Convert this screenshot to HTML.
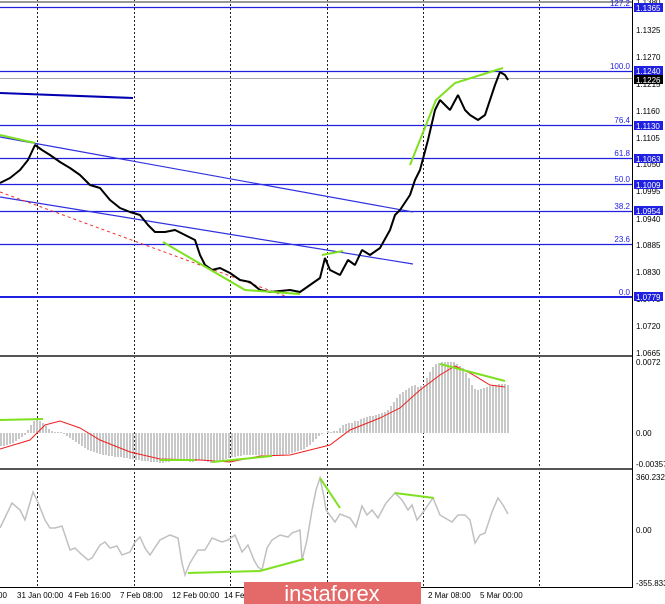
<!DOCTYPE html>
<html><head><meta charset="utf-8"><style>
html,body{margin:0;padding:0;background:#fff;}
svg{display:block;font-family:"Liberation Sans",sans-serif;}
</style></head><body>
<svg width="665" height="604" viewBox="0 0 665 604" xmlns="http://www.w3.org/2000/svg">
<rect width="665" height="604" fill="#fff"/>
<g stroke="#222" stroke-width="1" stroke-dasharray="2,2">
<line x1="37.5" y1="0" x2="37.5" y2="587"/><line x1="134.5" y1="0" x2="134.5" y2="587"/>
<line x1="230.5" y1="0" x2="230.5" y2="587"/><line x1="327.5" y1="0" x2="327.5" y2="587"/>
<line x1="423.5" y1="0" x2="423.5" y2="587"/><line x1="539.5" y1="0" x2="539.5" y2="587"/>
</g>
<line x1="0" y1="2" x2="632" y2="2" stroke="#999" stroke-width="2"/>
<g stroke="#2020e0" stroke-width="1.3">
<line x1="0" y1="7.5" x2="632" y2="7.5"/><line x1="0" y1="71.5" x2="632" y2="71.5"/>
<line x1="0" y1="125.5" x2="632" y2="125.5"/><line x1="0" y1="158.5" x2="632" y2="158.5"/>
<line x1="0" y1="184.5" x2="632" y2="184.5"/><line x1="0" y1="211.5" x2="632" y2="211.5"/>
<line x1="0" y1="244.5" x2="632" y2="244.5"/>
</g>
<line x1="0" y1="297" x2="632" y2="297" stroke="#2020e0" stroke-width="2"/>
<line x1="0" y1="78.5" x2="632" y2="78.5" stroke="#aaa" stroke-width="1"/>
<g font-size="8" fill="#2020e0" text-anchor="end">
<text x="630" y="6">127.2</text><text x="630" y="69">100.0</text><text x="630" y="123">76.4</text>
<text x="630" y="156">61.8</text><text x="630" y="182">50.0</text><text x="630" y="209">38.2</text>
<text x="630" y="242">23.6</text><text x="630" y="295">0.0</text>
</g>
<line x1="0" y1="93" x2="133" y2="98" stroke="#0000b0" stroke-width="2"/>
<line x1="0" y1="137" x2="413" y2="212" stroke="#3030e0" stroke-width="1.2"/>
<line x1="0" y1="197" x2="413" y2="264" stroke="#3030e0" stroke-width="1.2"/>
<line x1="0" y1="192" x2="285" y2="296" stroke="#f03030" stroke-width="1" stroke-dasharray="3,3"/>
<polyline fill="none" stroke="#000" stroke-width="2" stroke-linejoin="bevel" points="0,183 10,178 20,170 28,160 35,145 42,150 50,155 60,162 70,168 80,175 90,185 100,188 110,200 120,208 130,212 140,215 148,225 155,232 165,232 175,230 185,235 195,240 200,255 205,265 212,270 220,268 230,273 240,280 250,282 260,290 270,292 280,291 290,290 300,292 310,285 320,278 325,258 330,270 340,275 348,260 355,265 362,250 370,255 380,248 390,230 395,215 400,210 410,195 415,180 420,170 428,140 435,110 440,100 450,110 458,95 465,110 470,115 478,120 485,115 490,100 495,85 500,72 505,75 508,80"/>
<g fill="none" stroke="#7ee020" stroke-width="2">
<polyline points="0,135 35,143"/><polyline points="163,242 245,290 300,294"/>
<polyline points="322,255 343,251"/><polyline points="410,165 436,100 455,83 503,68"/>
</g>
<line x1="0" y1="356" x2="632" y2="356" stroke="#555" stroke-width="2"/>
<line x1="0" y1="469" x2="632" y2="469" stroke="#555" stroke-width="2"/>
<path fill="none" stroke="#c8c8c8" stroke-width="2" d="
M1 433V446M4 433V446M7 433V445M10 433V444M13 433V443M16 433V441M19 433V439M22 433V437M25 433V435M28 433V430M31 433V425M34 433V421M37 433V420M40 433V421M43 433V423M46 433V426M49 433V429M52 433V431M55 433V432M58 433V432M61 433V432M64 433V434M67 433V436M70 433V438M73 433V440M76 433V442M79 433V444M82 433V446M85 433V448M88 433V450M91 433V451M94 433V452M97 433V453M100 433V454M103 433V455M106 433V455M109 433V456M112 433V456M115 433V457M118 433V457M121 433V457M124 433V458M127 433V458M130 433V459M133 433V459M136 433V460M139 433V460M142 433V461M145 433V461M148 433V461M151 433V462M154 433V462M157 433V462M160 433V463M163 433V463M166 433V462M169 433V462M172 433V461M175 433V461M178 433V460M181 433V460M184 433V461M187 433V461M190 433V462M193 433V462M196 433V461M199 433V460M202 433V460M205 433V461M208 433V462M211 433V463M214 433V463M217 433V462M220 433V461M223 433V460M226 433V459M229 433V458M232 433V457M235 433V457M238 433V456M241 433V456M244 433V455M247 433V455M250 433V455M253 433V455M256 433V455M259 433V455M262 433V455M265 433V455M268 433V455M271 433V455M274 433V455M277 433V455M280 433V455M283 433V455M286 433V454M289 433V454M292 433V453M295 433V452M298 433V451M301 433V450M304 433V449M307 433V447M310 433V445M313 433V442M316 433V439M319 433V436M322 433V434M325 433V433M328 433V431M331 433V432M334 433V431M337 433V431M340 433V428M343 433V425M346 433V424M349 433V423M352 433V423M355 433V421M358 433V421M361 433V419M364 433V418M367 433V417M370 433V416M373 433V416M376 433V415M379 433V414M382 433V413M385 433V412M388 433V410M391 433V406M394 433V402M397 433V398M400 433V394M403 433V392M406 433V390M409 433V388M412 433V386M415 433V385M418 433V387M421 433V386M424 433V385M427 433V378M430 433V372M433 433V367M436 433V364M439 433V363M442 433V362M445 433V362M448 433V362M451 433V362M454 433V362M457 433V364M460 433V366M463 433V368M466 433V373M469 433V378M472 433V385M475 433V389M478 433V390M481 433V389M484 433V388M487 433V387M490 433V386M493 433V385M496 433V385M499 433V384M502 433V384M505 433V384M508 433V385"/>
<polyline fill="none" stroke="#ee2020" stroke-width="1" points="0,449 30,440 45,425 60,421 80,428 100,440 130,452 160,459 200,460 230,462 260,456 290,455 310,450 330,445 350,430 380,418 400,408 420,390 440,375 455,366 470,373 490,385 505,387"/>
<g fill="none" stroke="#7ee020" stroke-width="2">
<polyline points="0,420 43,419"/><polyline points="160,460 195,460"/><polyline points="212,462 272,456"/><polyline points="440,364 505,381"/>
</g>
<polyline fill="none" stroke="#c0c0c0" stroke-width="1.5" points="0,528 12,503 20,510 25,520 33,492 37,500 45,520 50,528 55,528 62,526 70,550 75,548 80,553 88,560 92,558 100,545 105,542 110,548 117,546 122,555 130,552 135,542 140,537 145,548 150,555 160,540 170,535 178,538 182,563 185,575 190,563 198,550 205,550 212,538 222,542 228,540 235,535 242,552 248,545 254,560 258,567 262,570 267,548 272,540 280,535 288,537 292,533 300,530 302,560 307,540 312,510 316,490 320,478 324,497 326,510 335,522 340,514 350,518 356,527 362,506 367,515 372,510 378,518 386,503 395,493 402,500 408,510 412,505 417,520 424,511 428,505 433,498 440,515 445,518 452,522 458,515 465,515 470,520 475,543 480,535 485,533 492,512 498,498 503,505 508,514"/>
<g fill="none" stroke="#7ee020" stroke-width="2">
<polyline points="188,573 260,571 304,559"/><polyline points="320,478 340,508"/><polyline points="395,493 434,498"/>
</g>
<line x1="632.5" y1="0" x2="632.5" y2="588" stroke="#000" stroke-width="1"/>
<line x1="0" y1="587.5" x2="633" y2="587.5" stroke="#000" stroke-width="1"/>
<g font-size="8" fill="#000">
<text x="636" y="5">1.1380</text><text x="636" y="33">1.1325</text><text x="636" y="60">1.1270</text>
<text x="636" y="87">1.1215</text><text x="636" y="114">1.1160</text><text x="636" y="141">1.1105</text>
<text x="636" y="167">1.1050</text><text x="636" y="194">1.0995</text><text x="636" y="222">1.0940</text>
<text x="636" y="248">1.0885</text><text x="636" y="275">1.0830</text><text x="636" y="302">1.0775</text>
<text x="636" y="329">1.0720</text><text x="636" y="356">1.0665</text>
<text x="636" y="365">0.0072</text><text x="636" y="436">0.00</text><text x="636" y="467">-0.00357</text>
<text x="636" y="480">360.2325</text><text x="636" y="533">0.00</text><text x="636" y="586">-355.833</text>
</g>
<g fill="#2020e0">
<rect x="634" y="3" width="29" height="9"/><rect x="634" y="66" width="29" height="9"/>
<rect x="634" y="121" width="29" height="9"/><rect x="634" y="154" width="29" height="9"/>
<rect x="634" y="180" width="29" height="9"/><rect x="634" y="206" width="29" height="9"/>
<rect x="634" y="292" width="29" height="9"/>
</g>
<rect x="634" y="75" width="29" height="9" fill="#000"/>
<g font-size="8" fill="#fff">
<text x="636" y="11">1.1365</text><text x="636" y="74">1.1240</text><text x="636" y="83">1.1226</text>
<text x="636" y="129">1.1130</text><text x="636" y="162">1.1063</text><text x="636" y="188">1.1009</text>
<text x="636" y="214">1.0954</text><text x="636" y="300">1.0779</text>
</g>
<g font-size="8" fill="#000">
<text x="-2" y="598">00</text><text x="17" y="598">31 Jan 00:00</text><text x="68" y="598">4 Feb 16:00</text>
<text x="120" y="598">7 Feb 08:00</text><text x="172" y="598">12 Feb 00:00</text><text x="224" y="598">14 Fe</text>
<text x="428" y="598">2 Mar 08:00</text><text x="480" y="598">5 Mar 00:00</text>
</g>
<rect x="244" y="582" width="177" height="22" fill="#e46a6a"/>
<text x="332" y="601" font-size="22" fill="#fff" text-anchor="middle">instaforex</text>
</svg>
</body></html>
